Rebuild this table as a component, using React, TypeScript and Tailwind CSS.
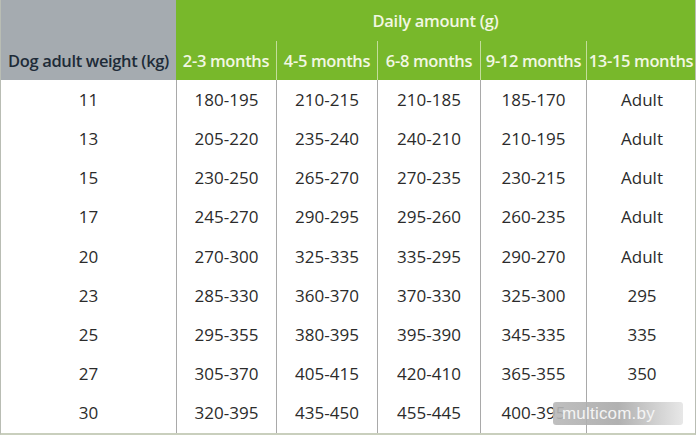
const months = ["2-3 months", "4-5 months", "6-8 months", "9-12 months", "13-15 months"];

const rows: [string, string[]][] = [
  ["11", ["180-195", "210-215", "210-185", "185-170", "Adult"]],
  ["13", ["205-220", "235-240", "240-210", "210-195", "Adult"]],
  ["15", ["230-250", "265-270", "270-235", "230-215", "Adult"]],
  ["17", ["245-270", "290-295", "295-260", "260-235", "Adult"]],
  ["20", ["270-300", "325-335", "335-295", "290-270", "Adult"]],
  ["23", ["285-330", "360-370", "370-330", "325-300", "295"]],
  ["25", ["295-355", "380-395", "395-390", "345-335", "335"]],
  ["27", ["305-370", "405-415", "420-410", "365-355", "350"]],
  ["30", ["320-395", "435-450", "455-445", "400-395", ""]],
];

const cols = "grid grid-cols-[175px_100px_101px_103px_106px_111px]";

export default function App() {
  return (
    <div className="relative w-[700px] h-[436px] bg-white font-['Open_Sans',sans-serif] overflow-hidden">
      <div className="w-[696px] border-l border-r border-[#b9bdb4] border-b-2 border-b-[#c9cfbd]">
        {/* header */}
        <div className="flex h-[80px]">
          <div className="w-[175px] bg-[#a5abb0] flex items-end justify-center pb-[6px]">
            <span className="text-[16.5px] font-semibold text-[#1e2b38] tracking-[-0.35px]">Dog adult weight (kg)</span>
          </div>
          <div className="flex-1 bg-[#78b82b] flex flex-col">
            <div className="h-[41px] flex items-center justify-center pt-[1px]">
              <span className="text-[16.5px] font-semibold text-[#f2f7e2] tracking-[-0.3px]">Daily amount (g)</span>
            </div>
            <div className="flex flex-1">
              {months.map((m, i) => (
                <div
                  key={m}
                  className={
                    (i === 0 ? "w-[100px] " : i === 1 ? "w-[101px] " : i === 2 ? "w-[103px] " : i === 3 ? "w-[106px] " : "flex-1 ") +
                    (i > 0 ? "border-l border-[#c3dd9b] " : "") +
                    "flex items-center justify-center pt-[2px] text-[16.5px] font-semibold text-[#f2f7e2] tracking-[-0.35px] whitespace-nowrap"
                  }
                >
                  {m}
                </div>
              ))}
            </div>
          </div>
        </div>

        {/* rows */}
        {rows.map(([w, vals]) => (
          <div key={w} className={cols + " h-[39.2px]"}>
            <div className="flex items-center justify-center text-[17px] text-[#2b2b2b]">{w}</div>
            {vals.map((v, i) => (
              <div
                key={i}
                className="border-l border-[#a9a9a9] flex items-center justify-center text-[17px] text-[#2b2b2b]"
              >
                {v}
              </div>
            ))}
          </div>
        ))}
      </div>

      {/* watermark */}
      <div className="absolute left-[553px] top-[402px] w-[130px] h-[23px] rounded-[3px] bg-gradient-to-r from-[#b8b8b8]/90 via-[#a8a8a8]/90 to-[#d8d8d8]/60 flex items-center pl-[9px]">
        <span className="text-[17px] text-[#f4f4f4] font-['Liberation_Sans',sans-serif] tracking-[0.2px]">multicom.by</span>
      </div>
    </div>
  );
}
